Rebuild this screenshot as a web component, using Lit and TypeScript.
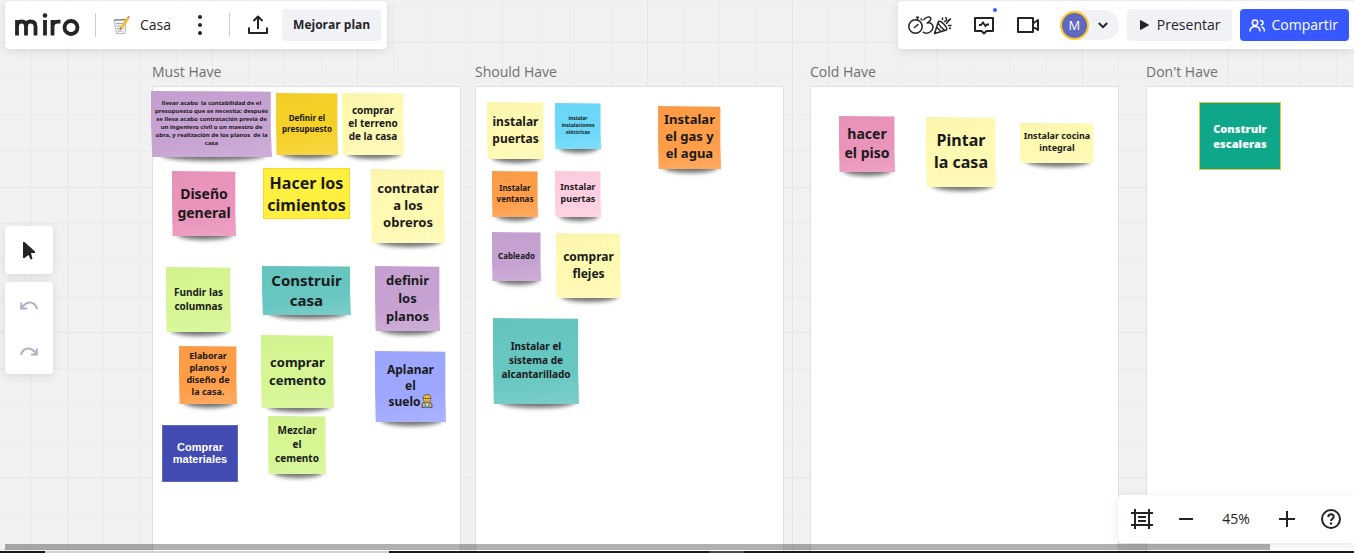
import { LitElement, html, css, svg, nothing } from "lit";
import { customElement, property } from "lit/decorators.js";
import { styleMap } from "lit/directives/style-map.js";

type Kind = "sticky" | "shape" | "arial" | "heavy";
interface Note {
  x: number; y: number; w: number; h: number;
  color: string; text: string; size: number; line: number;
  kind?: Kind; border?: string; emoji?: boolean;
}
interface Frame { title: string; x: number; notes: Note[]; }

const FRAME_TOP = 86;
const FRAME_WIDTH = 309;

const YELLOW = "#fff9b1", ORANGE = "#ff9d48", PURPLE = "#c6a2d2", PINK = "#ea94bb",
  GREEN = "#d5f692", TEAL = "#67c6c0";

// Note coordinates are board coordinates.
const frames: Frame[] = [
  { title: "Must Have", x: 152, notes: [
    { x: 151, y: 91, w: 121, h: 66, color: PURPLE, size: 6, line: 8, text: "llevar acabo  la contabilidad de el\npresupuesto que se necesita; después\nse lleva acabo contratación previa de\nun ingeniero civil o un maestro de\nobra, y realización de los planos  de la\ncasa" },
    { x: 276, y: 93, w: 62, h: 62, color: "#f5d128", size: 8, line: 11, text: "Definir el\npresupuesto" },
    { x: 342, y: 93, w: 62, h: 62, color: YELLOW, size: 10, line: 13, text: "comprar\nel terreno\nde la casa" },
    { x: 172, y: 171, w: 64, h: 65, color: PINK, size: 14, line: 19, text: "Diseño\ngeneral" },
    { x: 263, y: 168, w: 87, h: 51, color: "#fff03f", size: 16, line: 22, kind: "shape", border: "#fcd733", text: "Hacer los\ncimientos" },
    { x: 371, y: 169, w: 74, h: 74, color: YELLOW, size: 13, line: 17, text: "contratar\na los\nobreros" },
    { x: 166, y: 267, w: 65, h: 65, color: GREEN, size: 10, line: 14, text: "Fundir las\ncolumnas" },
    { x: 262, y: 266, w: 89, h: 49, color: TEAL, size: 15, line: 20, text: "Construir\ncasa" },
    { x: 375, y: 266, w: 65, h: 65, color: PURPLE, size: 13, line: 18, text: "definir\nlos\nplanos" },
    { x: 179, y: 346, w: 58, h: 58, color: ORANGE, size: 9, line: 12, text: "Elaborar\nplanos y\ndiseño de\nla casa." },
    { x: 261, y: 335, w: 73, h: 73, color: GREEN, size: 13, line: 18, text: "comprar\ncemento" },
    { x: 375, y: 351, w: 71, h: 71, color: "#9ea7ff", size: 12, line: 16, emoji: true, text: "Aplanar\nel\nsuelo" },
    { x: 162, y: 425, w: 76, h: 57, color: "#414bb2", size: 11, line: 12, kind: "arial", border: "#6068c0", text: "Comprar\nmateriales" },
    { x: 268, y: 416, w: 58, h: 58, color: GREEN, size: 10, line: 14, text: "Mezclar\nel\ncemento" },
  ] },
  { title: "Should Have", x: 475, notes: [
    { x: 487, y: 102, w: 57, h: 57, color: YELLOW, size: 12, line: 17, text: "instalar\npuertas" },
    { x: 555, y: 103, w: 46, h: 46, color: "#6bd8fa", size: 5, line: 7, text: "instalar\ninstalaciones\neléctricas" },
    { x: 658, y: 106, w: 63, h: 63, color: ORANGE, size: 13, line: 17, text: "Instalar\nel gas y\nel agua" },
    { x: 492, y: 171, w: 46, h: 46, color: ORANGE, size: 8, line: 11, text: "Instalar\nventanas" },
    { x: 555, y: 171, w: 46, h: 46, color: "#ffcee0", size: 9, line: 12, text: "Instalar\npuertas" },
    { x: 492, y: 232, w: 49, h: 49, color: PURPLE, size: 8, line: 11, text: "Cableado" },
    { x: 556, y: 233, w: 65, h: 65, color: YELLOW, size: 12, line: 17, text: "comprar\nflejes" },
    { x: 493, y: 318, w: 86, h: 86, color: TEAL, size: 10, line: 14, text: "Instalar el\nsistema de\nalcantarillado" },
  ] },
  { title: "Cold Have", x: 810, notes: [
    { x: 839, y: 116, w: 56, h: 56, color: PINK, size: 14, line: 19, text: "hacer\nel piso" },
    { x: 926, y: 117, w: 70, h: 70, color: YELLOW, size: 16, line: 22, text: "Pintar\nla casa" },
    { x: 1020, y: 123, w: 74, h: 40, color: YELLOW, size: 9, line: 12, text: "Instalar cocina\nintegral" },
  ] },
  { title: "Don't Have", x: 1146, notes: [
    { x: 1199, y: 102, w: 82, h: 68, color: "#0fa789", size: 11, line: 15, kind: "heavy", border: "#eac72e", text: "Construir\nescaleras" },
  ] },
];

const px = (n: number) => `${n}px`;

const builder = html`<svg class="emoji" viewBox="0 0 24 28" aria-label="obrero" role="img">
  <path d="M2 27v-5c0-4 3-6 7-6h6c4 0 7 2 7 6v5z" fill="#f5a623" stroke="#3b3f45" stroke-width="1.6"/>
  <path d="M7 17v10h10V17l-5 4z" fill="#5d9cd8"/><path d="M10 19h4v4h-4z" fill="#e6edf4"/>
  <circle cx="12" cy="11" r="7" fill="#fddc5c" stroke="#3b3f45" stroke-width="1.4"/>
  <path d="M4 9c0-5 3-8 8-8s8 3 8 8z" fill="#fbb81c" stroke="#3b3f45" stroke-width="1.4"/>
  <circle cx="9.500" cy="12" r="1"/><circle cx="14.500" cy="12" r="1"/><path d="M10 15h4" stroke="#333"/>
</svg>`;

@customElement("board-note")
class BoardNote extends LitElement {
  @property({ attribute: false }) note!: Note;

  static styles = css`
    :host { display: block; }
    .note {
      position: relative; width: 100%; height: 100%; box-sizing: border-box;
      display: flex; align-items: center; justify-content: center; padding-bottom: 2px;
      font-family: "Noto Sans", "Open Sans", sans-serif; font-weight: 700; color: #1a1a1a;
      text-align: center; white-space: pre;
    }
    .sticky::before {
      content: ""; position: absolute; z-index: -1; left: 8%; right: 5%; bottom: -4px; height: 10px;
      background: rgba(0, 0, 0, 0.55); border-radius: 0 0 50% 50% / 0 0 60% 60%; filter: blur(2px);
    }
    .paper {
      position: absolute; inset: 0; z-index: -1;
      background-image: linear-gradient(172deg, rgba(0, 0, 0, 0.02), transparent 30%, transparent 62%, rgba(255, 255, 255, 0.14));
      clip-path: polygon(0 0, 99% 1%, 99% 60%, 100% 100%, 1% 100%, 0 50%);
    }
    .shape { border: 1px solid; padding-bottom: 0; }
    .arial { border: 1px solid; color: #fff; font-family: "Liberation Sans", Arial, sans-serif; }
    .heavy { border: 1px solid; padding-bottom: 0; color: #fff; font-family: "Open Sans", sans-serif; font-weight: 800; }
    .emoji { width: 12px; height: 14px; vertical-align: -2px; }
    p { margin: 0; }
  `;

  render() {
    const n = this.note;
    const kind = n.kind ?? "sticky";
    const sticky = kind === "sticky";
    return html`<div class="note ${kind}" style=${styleMap({
      fontSize: px(n.size), lineHeight: px(n.line),
      ...(sticky ? {} : { backgroundColor: n.color, borderColor: n.border ?? n.color }),
    })}>${sticky ? html`<span class="paper" style=${styleMap({ backgroundColor: n.color })}></span>` : nothing}<p>${n.text}${n.emoji ? builder : nothing}</p></div>`;
  }
}

const icon = (w: number, h: number, body: unknown) =>
  html`<svg width=${w} height=${h} viewBox="0 0 ${w} ${h}" fill="none" stroke="currentColor" stroke-width="2" aria-hidden="true">${body}</svg>`;

const logo = icon(65, 24, svg`<g stroke-width="3.800">
  <path d="M2 22.500V7M2 13.500c0-3.500 1.800-5 4.500-5S11 10 11 13.500v9M11 13.500c0-3.500 1.800-5 4.500-5s5 1.500 5 5v9"/>
  <path d="M30 7v15.500M37.500 22.500V7M37.500 14c0-3.500 2-5.300 5.500-5.300h2.500"/>
  <circle cx="56" cy="14.500" r="6.500"/></g><circle cx="30" cy="2.500" r="2.300" fill="currentColor" stroke="none"/>`);
const memo = icon(17, 19, svg`<g stroke-width="1">
  <path d="M1 4h12l-1 13.500H3.500z" fill="#f4f4f2" stroke="#b9b9b6"/>
  <path d="M1 4l12-.5" stroke="#8e8e8c" stroke-width="1.500"/>
  <path d="M3 7.500h7M3.500 10h5M4 12.500h4M4.500 15h5" stroke="#a5a9ad"/>
  <path d="M15.500 1.500L8 12.500" stroke="#eec22e" stroke-width="2.800"/>
  <path d="M7.400 11.600l1.600 1-2.400 1.600z" fill="#7b5a2e" stroke="none"/>
  <path d="M15 .5l1.500 1" stroke="#df7f86" stroke-width="2"/></g>`);
const dots = icon(4, 20, svg`<g fill="currentColor" stroke="none"><circle cx="2" cy="2" r="2"/><circle cx="2" cy="10" r="2"/><circle cx="2" cy="18" r="2"/></g>`);
const upload = icon(20, 20, svg`<path d="M1 12.500V18h18v-5.500M10 14V2M5.500 6L10 1.500 14.500 6" stroke-linejoin="round"/>`);
const activity = icon(44, 20, svg`<g stroke-width="1.500" stroke-linecap="round" stroke-linejoin="round">
  <circle cx="7.500" cy="11.500" r="6.700"/><path d="M6.500 12.500l3.500-3M9.500 2.500V4.500M13 4l1 1M8.500 2.300h2"/>
  <path d="M16 4.500C17.500 2.500 22 .500 22.800 3.300c.5 2-2 3.500-3.600 4.700 3-.5 6 .500 5.800 4.200-.2 3.500-3.500 6-7 6-1.300 0-2-.400-2.800-1"/>
  <path d="M26.500 18.500L30.500 6.500M26.500 18.500L38.500 15M30.500 6.500c1.500-1 3.500.500 5.500 2.800s3.500 4.500 2.500 5.700c-1.200 1-3.500-.8-5.500-3s-3.500-4.300-2.500-5.500M29 12.500l4 4"/>
  <path d="M34.500 4.500V3M36.500 6.500c2.500-.500 2.500-2.500 1.200-4M38.500 8.500c1-1.500 1.500-3 4-4.500M40.500 10.500h2.500M41.500 13l.8.500"/></g>`);
const pulse = icon(20, 19, svg`<path d="M1 2h18v13h-6.500L10 17.500 7.500 15H1z" stroke-linejoin="round"/><path d="M5 9h2l2-2.500 2.500 3.500 1.500-1.500h2" stroke-width="1.800"/>`);
const video = icon(22, 16, svg`<path d="M1 1h15v14H1zM16 6.500L21 3v10l-5-3.500" stroke-linejoin="round"/>`);
const chevron = icon(10, 7, svg`<path d="M.8 1l4.200 4.200L9.200 1"/>`);
const play = icon(9, 10, svg`<path d="M.5.500L8.500 5 .5 9.500z" fill="currentColor" stroke="currentColor" stroke-width="1" stroke-linejoin="round"/>`);
const people = icon(16, 13, svg`<g stroke-width="1.500"><circle cx="6" cy="3.700" r="2.700"/><path d="M1 12.500c0-3.500 2-5 5-5s5 1.500 5 5"/><path d="M11 1.500c2.200 0 3 1 3 2.200S13.200 6 11.600 6M12.500 8c2 .5 3 2 3 4.500"/></g>`);
const cursor = icon(12, 19, svg`<path d="M0 1h1.500L12 10.500v1.500H8l1.500 6-1.800.5-2.200-4.500L1.500 17H0z" fill="currentColor" stroke="none"/>`);
const undo = icon(18, 9, svg`<path d="M17 8C16 4 13 1.500 9.500 1.500 6 1.500 4 4 1.800 6.500M1.200 1.500V7.500H7"/>`);
const redo = icon(18, 9, svg`<path d="M1 8C2 4 5 1.500 8.500 1.500c3.500 0 5.500 2.500 7.700 5M16.800 1.500V7.500H11"/>`);
const frameIcon = icon(22, 20, svg`<path d="M4 0v20M18 0v20M0 4h22M0 16h22M7 8h8M7 12h8"/>`);
const minus = icon(14, 14, svg`<path d="M0 7h14"/>`);
const plus = icon(16, 16, svg`<path d="M0 8h16M8 0v16"/>`);
const help = icon(20, 20, svg`<circle cx="10" cy="10" r="9"/><path d="M7.300 8C7.300 6.200 8.400 5.300 10 5.300s2.700 1 2.700 2.500c0 2-2.700 2-2.700 4.200"/><circle cx="10" cy="14.500" r="1.200" fill="currentColor" stroke="none"/>`);

@customElement("app-root")
class AppRoot extends LitElement {
  static styles = css`
    :host {
      display: block; position: relative; height: 100vh; overflow: hidden;
      font-family: "Open Sans", "Noto Sans", sans-serif; font-size: 14px; color: #222428;
    }
    .board {
      position: absolute; inset: 0; overflow: hidden; background-color: #f1f1f1;
      background-image:
        linear-gradient(90deg, #e6e6e6 1px, transparent 1px),
        linear-gradient(#e6e6e6 1px, transparent 1px),
        repeating-linear-gradient(90deg, #ebebeb 0 1px, transparent 1px 25%),
        repeating-linear-gradient(#ebebeb 0 1px, transparent 1px 25%);
      background-size: 145px 145px;
      background-position: 67px 42px;
    }
    .frame { position: absolute; bottom: 0; box-sizing: border-box; border: 1px solid #e0e0e0; border-bottom: 0; background: #fff; }
    .title { position: absolute; margin: 0; font-size: 14px; line-height: 20px; font-weight: 400; color: #6f6f6f; white-space: nowrap; }
    .item { position: absolute; z-index: 0; isolation: isolate; }
    .scroll { position: absolute; left: 5px; right: 84px; bottom: 3px; height: 6px; background: rgba(0, 0, 0, 0.31); }
    .edge { position: absolute; left: 0; right: 0; bottom: 0; height: 2px; display: flex; background: #1b191b; }
    .edge .window { margin-left: 45px; width: 344px; background: #d4d0d2; }
    .edge .tab { margin-left: 320px; width: 35px; background: #4a494b; }

    .panel { position: absolute; background: #fff; border-radius: 4px; box-shadow: 0 2px 10px rgba(5, 0, 56, 0.1); display: flex; align-items: center; }
    .left { left: 5px; top: 1px; height: 48px; padding: 0 6px 0 10px; }
    .right { right: 0; top: 1px; height: 48px; padding: 0 5px 0 10px; border-radius: 4px 0 0 4px; }
    .zoom { right: 0; bottom: 10px; height: 48px; padding: 0 13px; gap: 26px; border-radius: 4px 0 0 4px; }
    .tools { left: 5px; top: 226px; flex-direction: column; width: 48px; }
    .history { top: 282px; color: #adb1c5; }
    button {
      border: 0; margin: 0; padding: 0; background: none; color: inherit; font: inherit;
      display: flex; align-items: center; justify-content: center; cursor: pointer; line-height: 20px;
    }
    svg { display: block; flex: none; }
    .tools button { width: 48px; height: 48px; }
    .history button { height: 46px; }
    .sep { width: 1px; height: 24px; background: #c9cbd9; }
    .logo { margin-right: 15px; }
    .name { gap: 10px; margin: 0 27px 0 17px; }
    .more { margin-right: 27px; }
    .share { margin: 0 14px 0 18px; }
    .soft, .primary { height: 32px; border-radius: 4px; background: #f1f2f5; }
    .plan { padding: 0 11px; font-size: 12px; font-weight: 700; }
    .live { margin-right: 22px; }
    .feed { position: relative; margin-right: 23px; }
    .feed::after { content: ""; position: absolute; right: -3px; top: -8px; width: 4px; height: 4px; border-radius: 50%; background: #3859ff; }
    .cam { margin-right: 21px; }
    .user { height: 30px; border-radius: 15px; background: #f1f2f5; gap: 9px; padding-right: 11px; margin-right: 8px; }
    .avatar { width: 25px; height: 25px; border: 2px solid #ffc928; border-radius: 50%; background: #5f69bd; color: #fff; display: grid; place-items: center; font-size: 13px; }
    .present { gap: 8px; padding: 0 12px 0 13px; margin-right: 8px; }
    .primary { background: #3859ff; color: #fff; gap: 6px; padding: 0 11px 0 9px; }
    .level { width: 34px; }
  `;

  render() {
    return html`
      <main class="board">
        ${frames.map((f) => html`
          <h2 class="title" style=${styleMap({ left: px(f.x), top: px(FRAME_TOP - 24) })}>${f.title}</h2>
          <section class="frame" aria-label=${f.title} style=${styleMap({ left: px(f.x), top: px(FRAME_TOP), width: px(FRAME_WIDTH) })}></section>
          ${f.notes.map((n) => html`<board-note class="item" .note=${n}
            style=${styleMap({ left: px(n.x), top: px(n.y), width: px(n.w), height: px(n.h) })}></board-note>`)}
        `)}
      </main>
      <header class="panel left">
        <button class="logo" aria-label="miro">${logo}</button>
        <span class="sep"></span>
        <button class="name">${memo}<span>Casa</span></button>
        <button class="more" aria-label="Más">${dots}</button>
        <span class="sep"></span>
        <button class="share" aria-label="Exportar">${upload}</button>
        <button class="soft plan">Mejorar plan</button>
      </header>
      <nav class="panel right">
        <button class="live" aria-label="Actividades">${activity}</button>
        <button class="feed" aria-label="Novedades">${pulse}</button>
        <button class="cam" aria-label="Vídeo">${video}</button>
        <button class="user"><span class="avatar">M</span>${chevron}</button>
        <button class="soft present">${play}<span>Presentar</span></button>
        <button class="primary">${people}<span>Compartir</span></button>
      </nav>
      <div class="panel tools"><button aria-label="Seleccionar">${cursor}</button></div>
      <div class="panel tools history">
        <button aria-label="Deshacer">${undo}</button>
        <button aria-label="Rehacer">${redo}</button>
      </div>
      <div class="scroll"></div>
      <footer class="panel zoom">
        <button aria-label="Marcos">${frameIcon}</button>
        <button aria-label="Alejar">${minus}</button>
        <button class="level">45%</button>
        <button aria-label="Acercar">${plus}</button>
        <button aria-label="Ayuda">${help}</button>
      </footer>
      <div class="edge"><span class="window"></span><span class="tab"></span></div>
    `;
  }
}
